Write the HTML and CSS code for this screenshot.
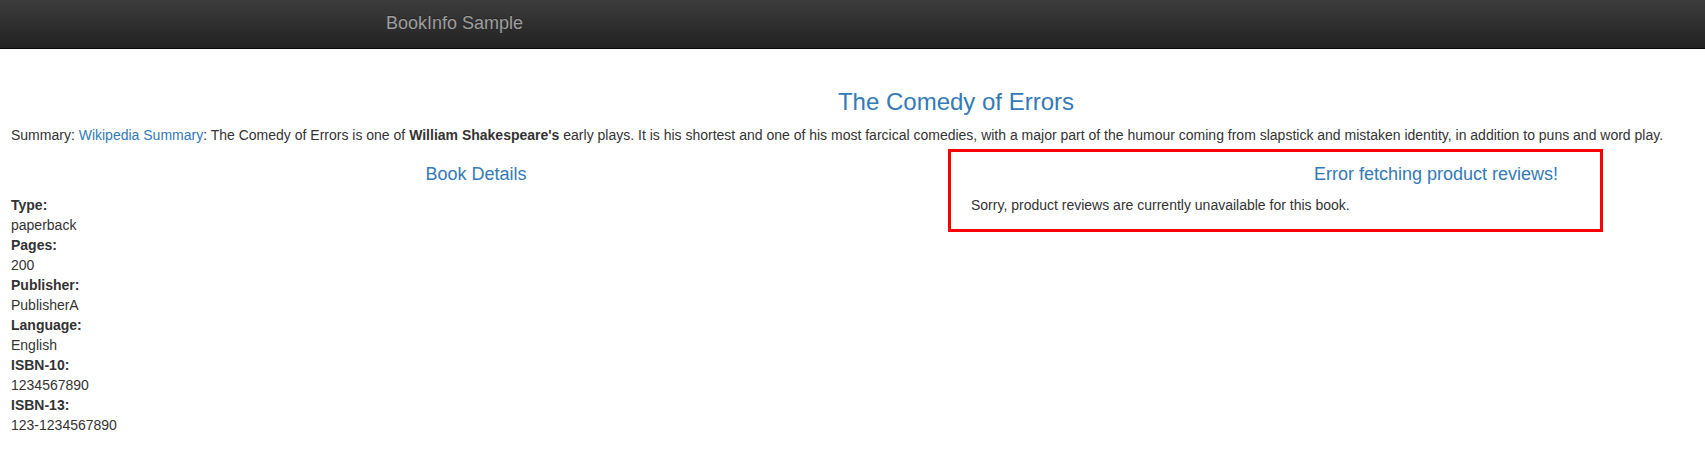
FILE: index.html
```html
<!DOCTYPE html>
<html lang="en">
<head>
<meta charset="utf-8">
<title>Simple Bookstore App</title>
<link rel="stylesheet" href="styles.css">
</head>
<body>
<div class="viewport">
  <div class="page">
    <nav class="navbar">
      <div class="navbar-container">
        <a class="brand" href="#">BookInfo Sample</a>
      </div>
    </nav>
    <div class="content">
      <div class="intro">
        <h3 class="title">The Comedy of Errors</h3>
        <p class="summary">Summary: <a class="link" href="#">Wikipedia Summary</a>: The Comedy of Errors is one of <b>William Shakespeare's</b> early plays. It is his shortest and one of his most farcical comedies, with a major part of the humour coming from slapstick and mistaken identity, in addition to puns and word play.</p>
      </div>
      <div class="columns">
        <div class="col">
          <h4 class="subtitle">Book Details</h4>
          <dl class="details">
            <dt>Type:</dt><dd>paperback</dd>
            <dt>Pages:</dt><dd>200</dd>
            <dt>Publisher:</dt><dd>PublisherA</dd>
            <dt>Language:</dt><dd>English</dd>
            <dt>ISBN-10:</dt><dd>1234567890</dd>
            <dt>ISBN-13:</dt><dd>123-1234567890</dd>
          </dl>
        </div>
        <div class="col col-reviews">
          <h4 class="subtitle">Error fetching product reviews!</h4>
          <p class="message">Sorry, product reviews are currently unavailable for this book.</p>
          <div class="highlight"></div>
        </div>
      </div>
    </div>
  </div>
</div>
</body>
</html>
```
FILE: styles.css
```css
html, body {
  margin: 0;
  padding: 0;
  overflow: hidden;
  background: #fff;
}
body {
  font-family: "Liberation Sans", Arial, Helvetica, sans-serif;
  font-size: 14px;
  line-height: 20px;
  color: #333;
}
.viewport {
  width: 100%;
  overflow: hidden;
}
.page {
  width: 1920px;
  margin-left: -4px;
}
.navbar {
  height: 48px;
  border-bottom: 1px solid #080808;
  background: linear-gradient(to bottom, #3c3c3c 0, #222 100%);
}
.navbar-container {
  width: 1170px;
  margin: 0 auto;
  padding: 0 15px;
  box-sizing: border-box;
}
.brand {
  display: inline-block;
  margin-left: -15px;
  padding: 13px 15px;
  font-size: 18px;
  line-height: 20px;
  color: #9d9d9d;
  text-decoration: none;
  text-shadow: 0 -1px 0 rgba(0,0,0,.25);
}
.content {
  padding-top: 40px;
}
.intro {
  padding: 0 15px;
}
.title {
  margin: 0 0 10px;
  font-size: 24px;
  font-weight: 500;
  line-height: 1.1;
  text-align: center;
  color: #337ab7;
}
.summary {
  margin: 0 0 10px;
  white-space: nowrap;
}
.link {
  color: #337ab7;
  text-decoration: none;
}
.columns {
  display: grid;
  grid-template-columns: 960px 960px;
}
.col {
  padding: 0 15px;
}
.col-reviews {
  position: relative;
}
.subtitle {
  margin: 10px 0;
  font-size: 18px;
  font-weight: 500;
  line-height: 1.1;
  text-align: center;
  color: #337ab7;
}
.details {
  margin: 0 0 20px;
}
.details dt {
  font-weight: bold;
}
.details dd {
  margin: 0;
}
.message {
  margin: 0 0 10px;
}
.highlight {
  position: absolute;
  left: -8px;
  top: -6px;
  width: 655px;
  height: 83px;
  box-sizing: border-box;
  border: 3px solid #ff0000;
  pointer-events: none;
}
```
